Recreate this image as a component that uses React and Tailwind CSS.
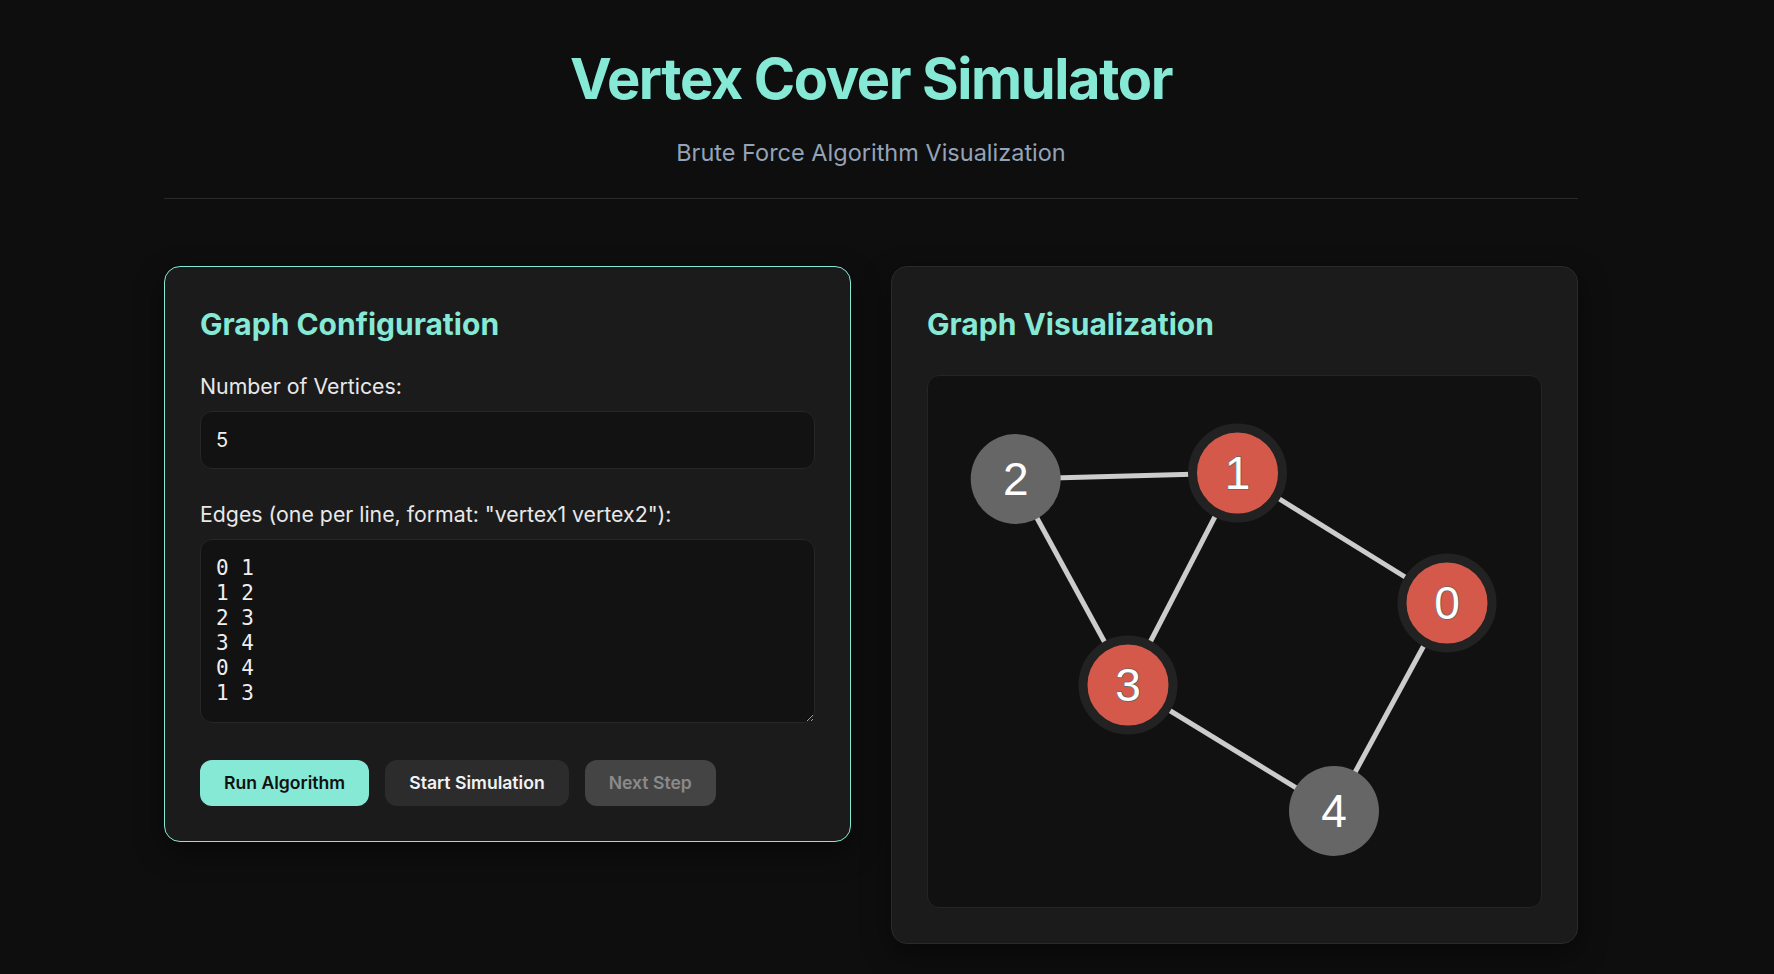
import React from 'react';

const nodes = [
  { id: 0, x: 519, y: 227, inCover: true },
  { id: 1, x: 309.5, y: 97, inCover: true },
  { id: 2, x: 87.7, y: 103, inCover: false },
  { id: 3, x: 200, y: 309, inCover: true },
  { id: 4, x: 406, y: 435, inCover: false },
];

const edges = [
  [0, 1],
  [1, 2],
  [2, 3],
  [3, 4],
  [0, 4],
  [1, 3],
];

const GraphCanvas = () => {
  const pos = (id) => nodes.find((n) => n.id === id);

  return (
    <div className="rounded-xl border border-[#252525] bg-[#111111] overflow-hidden">
      <svg width="616" height="531" className="block">
        {edges.map(([a, b], i) => {
          const p = pos(a);
          const q = pos(b);
          return (
            <line key={i} x1={p.x} y1={p.y} x2={q.x} y2={q.y} stroke="#cccccc" strokeWidth="5" />
          );
        })}
        {nodes.map((n) => (
          <g key={n.id}>
            <circle
              cx={n.x}
              cy={n.y}
              r="45"
              fill={n.inCover ? '#d5594a' : '#666666'}
              stroke={n.inCover ? '#222222' : 'none'}
              strokeWidth="9"
            />
            <text
              x={n.x}
              y={n.y}
              textAnchor="middle"
              dominantBaseline="central"
              fill="#ffffff"
              stroke="#666666"
              strokeWidth="1.5"
              paintOrder="stroke"
              style={{ fontFamily: '"Liberation Sans", Arial, sans-serif', fontSize: 46 }}
            >
              {n.id}
            </text>
          </g>
        ))}
      </svg>
    </div>
  );
};

const App = () => {
  return (
    <div className="min-h-screen bg-[#0e0e0e] font-['Inter',_sans-serif] text-[#e8e8e8] pr-8">
      <div className="max-w-[1414px] mx-auto pt-[46px] pb-8">
        {/* Header */}
        <header className="text-center border-b border-[#2a2a2a] pb-[29px]">
          <h1 className="text-[56px] leading-[1.2] font-bold text-[#86e9d5] tracking-[-0.025em]">
            Vertex Cover Simulator
          </h1>
          <p className="mt-[23px] text-[23.5px] leading-[33px] text-[#94a3b8]">
            Brute Force Algorithm Visualization
          </p>
        </header>

        <div className="grid grid-cols-2 gap-10 items-start mt-[67px]">
          {/* Config panel */}
          <section className="rounded-2xl border border-[#86e9d5] bg-[#1b1b1b] p-[35px] shadow-[0_10px_30px_rgba(0,0,0,0.45)]">
            <h2 className="text-[30px] leading-[45px] font-bold text-[#86e9d5] mb-[24px]">
              Graph Configuration
            </h2>

            <div className="mb-[30px]">
              <label className="block text-[21.3px] leading-[30px] mb-[10px]">Number of Vertices:</label>
              <input
                type="number"
                defaultValue={5}
                className="block w-full rounded-xl border border-[#272727] bg-[#121212] px-[15px] py-[13px] text-[20px] leading-[30px] text-[#eeeeee] outline-none [appearance:textfield] [&::-webkit-inner-spin-button]:appearance-none"
              />
            </div>

            <div className="mb-[37px]">
              <label className="block text-[21.3px] leading-[30px] mb-[10px]">
                Edges (one per line, format: "vertex1 vertex2"):
              </label>
              <textarea
                rows={6}
                defaultValue={'0 1\n1 2\n2 3\n3 4\n0 4\n1 3'}
                className="block w-full rounded-xl border border-[#272727] bg-[#121212] px-[15px] py-[16px] font-['DejaVu_Sans_Mono',_monospace] text-[21px] leading-[25px] text-[#eeeeee] outline-none"
              />
            </div>

            <div className="flex gap-4">
              <button className="rounded-xl bg-[#86e9d5] px-6 py-[10px] text-[17.6px] leading-[26px] font-semibold text-[#111111]">
                Run Algorithm
              </button>
              <button className="rounded-xl bg-[#2c2c2c] px-6 py-[10px] text-[17.6px] leading-[26px] font-semibold text-[#f2f2f2]">
                Start Simulation
              </button>
              <button
                disabled
                className="rounded-xl bg-[#444444] px-6 py-[10px] text-[17.6px] leading-[26px] font-semibold text-[#8a8a8a]"
              >
                Next Step
              </button>
            </div>
          </section>

          {/* Visualization panel */}
          <section className="rounded-2xl border border-[#2a2a2a] bg-[#1b1b1b] p-[35px] shadow-[0_10px_30px_rgba(0,0,0,0.45)]">
            <h2 className="text-[30px] leading-[45px] font-bold text-[#86e9d5] mb-[28px]">
              Graph Visualization
            </h2>
            <GraphCanvas />
          </section>
        </div>
      </div>
    </div>
  );
};

export default App;
